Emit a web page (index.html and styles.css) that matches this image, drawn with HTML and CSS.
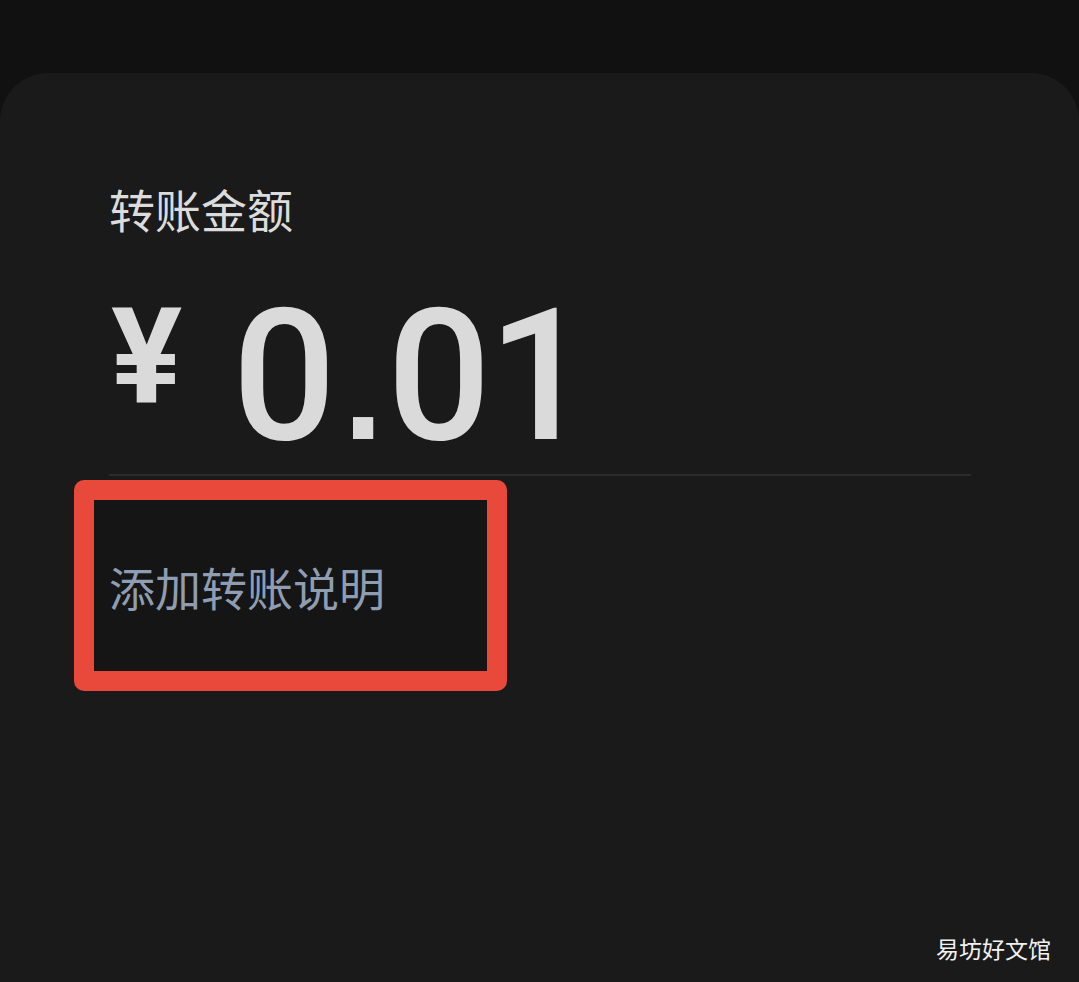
FILE: index.html
```html
<!DOCTYPE html>
<html lang="zh-CN">
<head>
<meta charset="utf-8">
<title>转账</title>
<link rel="stylesheet" href="styles.css">
</head>
<body>
<div class="page">
  <div class="card">
    <div class="label">转账金额</div>
    <div class="amount">
      <span class="yen">¥</span>
      <span class="value">0<span class="dot">.</span>01</span>
    </div>
    <div class="divider"></div>
    <div class="note">添加转账说明</div>
  </div>
  <div class="highlight"></div>
  <div class="watermark">易坊好文馆</div>
</div>
</body>
</html>
```
FILE: styles.css
```css
html, body {
  margin: 0;
  padding: 0;
  background: #111111;
}
body {
  font-family: "Noto Sans CJK SC", "Noto Sans", sans-serif;
}
.page {
  position: relative;
  width: 1079px;
  height: 982px;
  padding-top: 73px;
  box-sizing: border-box;
  overflow: hidden;
}
.card {
  background: #1a1a1a;
  border-radius: 48px 48px 0 0;
  height: 909px;
  padding: 0 109px 0 109px;
  box-sizing: border-box;
  display: flex;
  flex-direction: column;
}
.label {
  margin-top: 107px;
  font-size: 46px;
  line-height: 56px;
  color: #dcdcdc;
}
.amount {
  display: flex;
  align-items: flex-start;
  margin-top: 49px;
  height: 183px;
  font-family: Roboto, "Liberation Sans", sans-serif;
  color: #dadada;
}
.yen {
  font-size: 133px;
  font-weight: 700;
  line-height: 1;
  margin-top: 5px;
  margin-left: 2px;
}
.value {
  font-size: 183px;
  font-weight: 500;
  line-height: 1;
  margin-left: 50px;
  letter-spacing: -3px;
}
.dot {
  font-family: "DejaVu Sans", sans-serif;
  font-size: 115px;
  font-weight: 700;
  margin-left: 8px;
  letter-spacing: 2px;
}
.divider {
  height: 2px;
  background: #2b2b2b;
  margin-top: 6px;
  width: 862px;
}
.note {
  margin-top: 82px;
  font-size: 46px;
  line-height: 56px;
  color: #8f9db2;
  position: relative;
  z-index: 2;
}
.highlight {
  position: absolute;
  left: 74px;
  top: 480px;
  width: 433px;
  height: 211px;
  box-sizing: border-box;
  border: 20px solid #e8493a;
  border-radius: 10px;
  background: #151515;
  z-index: 1;
}
.watermark {
  position: absolute;
  right: 28px;
  bottom: 19px;
  font-size: 23px;
  line-height: 30px;
  color: #f2f2f2;
}
```
